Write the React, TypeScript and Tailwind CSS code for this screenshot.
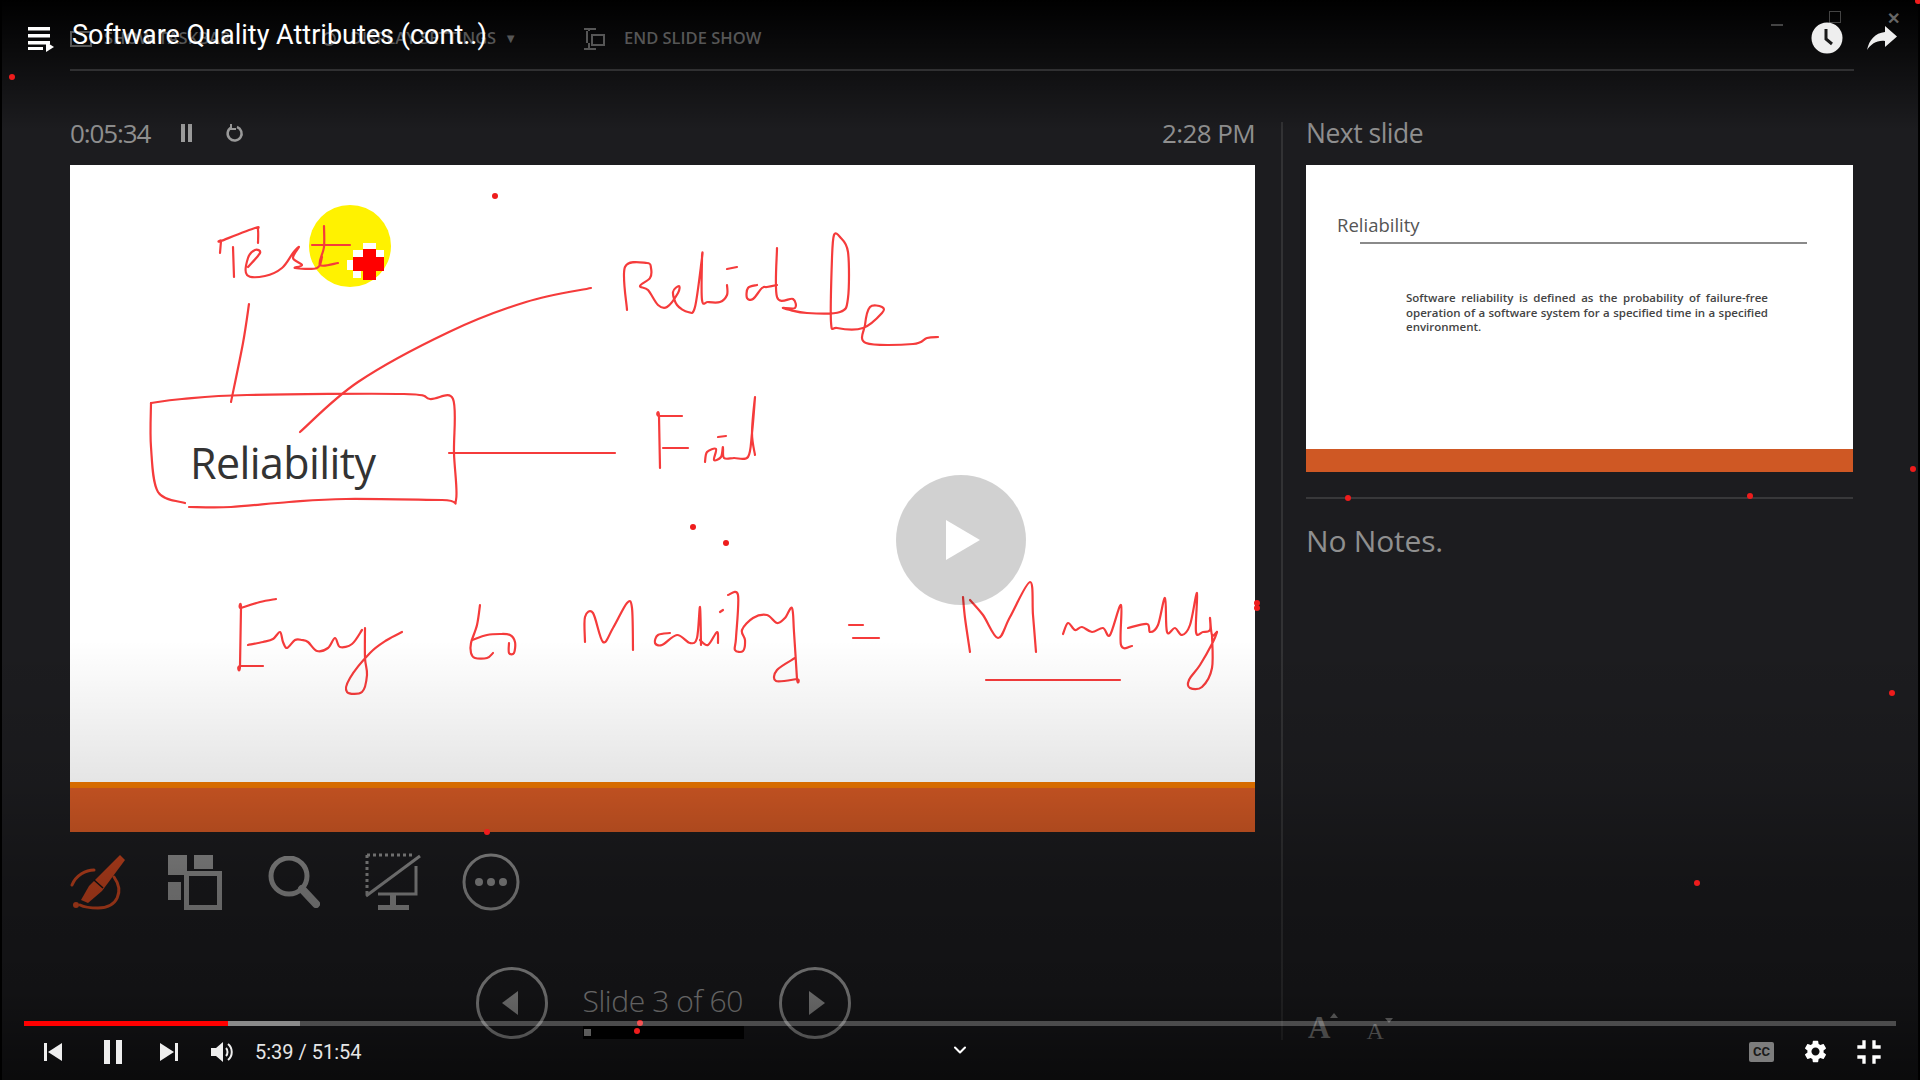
import React from "react";
import { ChevronDown } from "lucide-react";
import { MdSettings, MdFullscreenExit } from "react-icons/md";

// pen strokes as screen coordinates (the slide svg's viewBox is offset to match).
// a repeated point keeps a corner sharp
const inkStrokes = [
  // Test
  "220,253 221,241 221,241 255,228 258,230 258,243",
  "233,247 234,277",
  "248,267 260,253 255,250 248,258 247,275 265,276 282,268 293,253 299,247 293,258 302,265 295,268 317,268 322,257",
  "324,226 324,247 320,265 338,263",
  "312,245 350,245",
  // connectors and box
  "249,304 243,343 231,402",
  "591,288 526,302 449,332 358,382 300,432",
  "151,403 182,399 247,395 404,394 430,399 453,399 454,453 456,500 442,500 346,499 289,502 231,507 189,507",
  "151,403 151,447 158,492 185,503",
  "449,453 615,453",
  // Reliable
  "627,310 625,267 647,263 651,268 650,278 640,286 648,290 658,305 667,307 678,293 679,286 673,292 677,305 688,312 695,307 702,258 702,258 702,300 708,302 720,302 727,295 727,285",
  "727,269 737,267",
  "757,285 748,288 747,298 753,299 762,288 767,287 777,285",
  "777,248 777,297 793,299 795,308 783,308 807,313 840,312 848,298 848,252 840,237 834,235 832,258 831,322 837,328 863,328 882,313 882,307 870,307 865,325 866,343 913,344 927,338 938,337",
  // Fail
  "660,468 659,416 659,416 682,416",
  "663,448 688,448",
  "705,462 707,452 716,449 714,460 721,457 723,447 724,458 734,458 748,457 752,433 755,397 752,433 755,455",
  "718,437 726,436",
  // Easy
  "276,599 260,602 241,608 241,608 240,666 240,666 263,666",
  "248,645 263,642 273,639 280,632 283,642 287,648 295,640 302,640 308,642 317,651 328,648 335,638 340,647 352,644 362,630",
  "365,628 365,658 367,675 362,692 347,692 350,678 370,653 387,640 402,632",
  // to
  "480,605 477,625 471,643 471,653 475,658 487,658 493,653",
  "472,640 487,635 500,634 510,635 515,642 514,653 509,653 509,643",
  // Modify
  "585,642 585,617 593,613 603,642 613,628 627,603 632,608 633,650",
  "670,633 658,635 655,643 662,645 677,635 690,643 697,638 700,607 701,645",
  "700,640 708,645 717,632 718,643",
  "720,612 723,610",
  "728,595 738,595 736,638 735,650 743,651 745,640 742,630 753,618 767,615 777,623 785,618 792,608 794,632 797,679 797,679 776,681 777,670 795,658",
  // =
  "849,625 863,625",
  "853,638 879,638",
  // Maintainably
  "963,597 965,618 970,652",
  "970,600 983,615 998,638 1010,617 1030,582 1033,615 1036,652",
  "1063,634 1068,623 1075,630 1082,627 1092,632 1103,628 1110,635 1121,605 1121,645 1132,646",
  "1128,628 1147,624 1150,632 1158,625 1165,598 1167,632 1175,628 1182,635 1190,625 1197,593 1196,632 1203,632 1210,630 1210,618 1212,635 1217,632",
  "1217,632 1213,642 1200,665 1189,680 1190,688 1202,687 1212,668 1212,635",
  "986,680 1120,680",
];

// catmull-rom through the traced points, handwriting is not polygonal
const smoothPath = (stroke: string) => {
  const p = stroke.split(" ").map((s) => s.split(",").map(Number));
  let d = `M${p[0][0]} ${p[0][1]}`;
  for (let i = 0; i < p.length - 1; i++) {
    const a = p[i - 1] ?? p[i];
    const b = p[i];
    const c = p[i + 1];
    const e = p[i + 2] ?? c;
    d += ` C${b[0] + (c[0] - a[0]) / 6} ${b[1] + (c[1] - a[1]) / 6} ${c[0] - (e[0] - b[0]) / 6} ${c[1] - (e[1] - b[1]) / 6} ${c[0]} ${c[1]}`;
  }
  return d;
};

const laserDots = [
  [12, 77], [495, 196], [693, 527], [726, 543], [487, 832], [640, 1023], [637, 1031],
  [1257, 603], [1257, 608], [1348, 498], [1750, 496], [1913, 469], [1892, 693], [1697, 883], [1918, 1],
];

const PenIcon = () => (
  <svg viewBox="0 0 56 58" className="w-14 h-[58px] text-[#c8451f]" fill="none">
    <path d="M2 32 C6 22 16 17 24 17" stroke="currentColor" strokeWidth="3" strokeLinecap="round" />
    <path d="M44 24 C54 38 48 55 28 55 C20 55 14 54 10 52" stroke="currentColor" strokeWidth="3" strokeLinecap="round" />
    <path d="M50 2 L55 7 L32 38 L18 50 L11 47 L19 33 Z" fill="currentColor" />
    <path d="M24 27 L33 35" stroke="#141416" strokeWidth="1.5" />
    <circle cx="6" cy="52" r="3" fill="currentColor" />
  </svg>
);

const SlidesIcon = () => (
  <svg viewBox="0 0 54 55" className="w-[54px] h-[55px] text-[#909090]" fill="none">
    <rect x="0" y="0" width="19" height="20" fill="currentColor" />
    <rect x="26" y="0" width="19" height="14" fill="currentColor" />
    <rect x="0" y="27" width="13" height="18" fill="currentColor" />
    <rect x="18.5" y="18.5" width="33" height="34" stroke="currentColor" strokeWidth="5" />
  </svg>
);

const SearchIcon = () => (
  <svg viewBox="0 0 52 52" className="w-[52px] h-[52px] text-[#909090]" fill="none">
    <circle cx="21" cy="20" r="18" stroke="currentColor" strokeWidth="5" />
    <path d="M34 33 L48 48" stroke="currentColor" strokeWidth="8" strokeLinecap="round" />
  </svg>
);

const BlackScreenIcon = () => (
  <svg viewBox="0 0 56 58" className="w-14 h-[58px] text-[#909090]" fill="none">
    <path d="M2 2 H50 M2 2 V42" stroke="currentColor" strokeWidth="3" strokeDasharray="3 3" />
    <path d="M1 43 L55 3" stroke="currentColor" strokeWidth="3" />
    <path d="M51 13 V41 H13" stroke="currentColor" strokeWidth="3" />
    <rect x="25" y="41" width="6" height="12" fill="currentColor" />
    <rect x="13" y="52" width="31" height="5" fill="currentColor" />
  </svg>
);

const MoreIcon = () => (
  <svg viewBox="0 0 58 58" className="w-[58px] h-[58px] text-[#909090]" fill="none">
    <circle cx="29" cy="29" r="27" stroke="currentColor" strokeWidth="3" />
    <circle cx="17" cy="29" r="4" fill="currentColor" />
    <circle cx="29" cy="29" r="4" fill="currentColor" />
    <circle cx="41" cy="29" r="4" fill="currentColor" />
  </svg>
);

const NavButton = ({ dir }: { dir: "prev" | "next" }) => (
  <svg viewBox="0 0 72 72" className="w-[72px] h-[72px] text-[#a0a0a0]" fill="none">
    <circle cx="36" cy="36" r="34.5" stroke="currentColor" strokeWidth="3" />
    {dir === "prev" ? <path d="M42 24 V48 L26 36 Z" fill="currentColor" /> : <path d="M30 24 V48 L46 36 Z" fill="currentColor" />}
  </svg>
);

const Slide = () => (
  <div className="relative w-[1185px] h-[667px] bg-white flex flex-col overflow-hidden">
    <div className="flex-1 pt-[268px] pl-[120px]">
      <p className="font-['Open_Sans'] text-[43px] leading-[60px] text-[#333] tracking-[-0.6px]">Reliability</p>
    </div>
    <div className="h-[6px] bg-[#f07800]" />
    <div className="h-[44px] bg-[#d65a25]" />
    {/* pen ink and the cursor */}
    <svg viewBox="70 165 1185 667" className="absolute inset-0 w-full h-full" fill="none">
      <circle cx="350" cy="246" r="41" fill="#fff200" />
      <rect x="347" y="260" width="6" height="10" fill="#fff" />
      <rect x="363" y="243" width="13" height="6" fill="#fff" />
      <rect x="353" y="250" width="10" height="7" fill="#fff" />
      <rect x="376" y="250" width="8" height="7" fill="#fff" />
      <rect x="353" y="271" width="8" height="7" fill="#fff" />
      <rect x="353" y="257" width="31" height="14" fill="#f00" />
      <rect x="363" y="249" width="13" height="31" fill="#f00" />
      {inkStrokes.map((s) => (
        <path key={s} d={smoothPath(s)} stroke="#f53b3b" strokeWidth="2.2" strokeLinejoin="round" strokeLinecap="round" />
      ))}
    </svg>
  </div>
);

const NextThumb = () => (
  <div className="w-[547px] h-[307px] bg-white flex flex-col">
    <div className="flex-1 pt-[46px]">
      <p className="pl-[31px] font-['Open_Sans'] text-[18.5px] leading-[28px] text-[#555]">Reliability</p>
      <div className="ml-[54px] w-[447px] h-[2px] mt-[3px] bg-[#8a8a8a]" />
      <p className="ml-[100px] w-[362px] mt-[47px] font-['Open_Sans'] font-semibold text-[11.5px] leading-[14.5px] text-[#444] text-justify">
        Software reliability is defined as the probability of failure-free operation of a software system for a specified time in a specified environment.
      </p>
    </div>
    <div className="h-[23px] bg-[#cf5824]" />
  </div>
);

export default function App() {
  return (
    <div className="relative w-[1920px] h-[1080px] overflow-hidden bg-[#1c1c1f] flex flex-col font-['Open_Sans'] shadow-[inset_2px_0_0_#000,inset_-2px_0_0_#000]">
      {/* faded presenter toolbar */}
      <div className="relative z-10 ml-[70px] w-[1784px] h-[71px] shrink-0 border-b-2 border-[#303032] flex items-center gap-[20px] pt-[8px] text-[#565656] font-semibold text-[16.5px]">
        <div className="flex items-center gap-[12px] w-[232px]">
          <span className="w-[22px] h-[16px] border-2 border-[#565656]" />
          <span>SHOW TASKBAR</span>
        </div>
        <div className="flex items-center gap-[14px] w-[240px]">
          <span className="w-[14px] h-[14px] rounded-full border-2 border-[#565656]" />
          <span className="whitespace-nowrap">DISPLAY SETTINGS</span>
          <span className="-ml-[6px] text-[13px]">▼</span>
        </div>
        <div className="flex items-center gap-[18px]">
          <svg viewBox="0 0 24 24" className="w-6 h-6" fill="none" stroke="#565656" strokeWidth="2">
            <path d="M2 2 H14 M7 2 V4 M5 4 V16 M7 16 V21 M2 22 H14" />
            <rect x="10" y="8" width="12" height="10" />
          </svg>
          <span>END SLIDE SHOW</span>
        </div>
      </div>

      <div className="flex pl-[70px] pt-[51px]">
        {/* current slide column */}
        <div className="w-[1185px] flex flex-col">
          <div className="h-[43px] flex items-start justify-between text-[#8f8f8f] text-[26px] leading-[22px]">
            <div className="flex items-center">
              <span className="tracking-[-1.1px]">0:05:34</span>
              <span className="ml-[31px] flex gap-[3px]">
                <span className="w-[4px] h-[18px] bg-[#9a9a9a]" />
                <span className="w-[4px] h-[18px] bg-[#9a9a9a]" />
              </span>
              <svg viewBox="0 0 20 20" className="ml-[33px] w-[20px] h-[20px]" fill="none" stroke="#9a9a9a" strokeWidth="2.5">
                <path d="M12 4 A7 7 0 1 1 6 4.6" />
                <path d="M6 1 V6 H11" strokeWidth="2" />
              </svg>
            </div>
            <span className="tracking-[-0.6px]">2:28 PM</span>
          </div>
          <Slide />
          <div className="mt-[21px] h-[58px] flex items-center">
            <PenIcon />
            <div className="ml-[42px]"><SlidesIcon /></div>
            <div className="ml-[46px]"><SearchIcon /></div>
            <div className="ml-[45px]"><BlackScreenIcon /></div>
            <div className="ml-[41px]"><MoreIcon /></div>
          </div>
          <div className="mt-[56px] flex items-center justify-center gap-[35px] pl-[1px] text-[#a0a0a0]">
            <NavButton dir="prev" />
            <div className="w-[161px] h-[72px] flex flex-col">
              <span className="h-[59px] pt-[15px] text-[30px] leading-[38px] font-light whitespace-nowrap tracking-[-0.4px]">Slide 3 of 60</span>
              <div className="h-[13px] bg-black flex items-center pl-[1px]">
                <span className="w-[7px] h-[7px] bg-[#b0b0b0]" />
              </div>
            </div>
            <NavButton dir="next" />
          </div>
        </div>

        <div className="ml-[26px] w-[2px] h-[918px] bg-[#323234]" />

        {/* next slide and notes column */}
        <div className="ml-[23px] w-[547px] h-[918px] flex flex-col text-[#8f8f8f]">
          <div className="h-[43px] text-[26.5px] leading-[22px] tracking-[-0.5px]">Next slide</div>
          <NextThumb />
          <div className="mt-[25px] h-[2px] bg-[#38383a]" />
          <p className="mt-[22px] text-[30px] leading-[40px] tracking-[-0.2px]">No Notes.</p>
          <div className="mt-auto -mb-[3px] flex items-end gap-[36px] font-['Liberation_Serif'] font-bold text-[#8c8c8c] leading-none">
            <span className="relative ml-[2px] text-[31px]">
              A
              <span className="absolute -right-[8px] top-[1px] w-0 h-0 border-x-[4px] border-x-transparent border-b-[5px] border-b-[#8c8c8c]" />
            </span>
            <span className="relative text-[24px] font-normal">
              A
              <span className="absolute -right-[9px] top-[-1px] w-0 h-0 border-x-[4px] border-x-transparent border-t-[5px] border-t-[#8c8c8c]" />
            </span>
          </div>
        </div>
      </div>

      {/* player gradients */}
      <div className="absolute top-0 inset-x-0 h-[130px] bg-gradient-to-b from-black to-transparent" />
      <div className="absolute bottom-0 inset-x-0 h-[440px] bg-[linear-gradient(to_bottom,rgba(0,0,0,0)_0%,rgba(0,0,0,0.1)_32%,rgba(0,0,0,0.28)_55%,rgba(0,0,0,0.36)_80%,rgba(0,0,0,0.62)_100%)]" />

      {/* laser pointer trail */}
      <svg viewBox="0 0 1920 1080" className="absolute inset-0 w-full h-full">
        {laserDots.map(([x, y]) => (
          <circle key={`${x}-${y}`} cx={x} cy={y} r="3" fill="#ee1c1c" />
        ))}
      </svg>

      {/* player title bar */}
      <div className="absolute z-20 top-0 inset-x-0 h-[60px] pl-[28px] pr-[23px] flex items-center justify-between pt-[18px]">
        <div className="flex items-center gap-[18px]">
          <svg viewBox="0 0 26 25" className="w-[26px] h-[25px]" fill="#fff">
            <rect x="0" y="0" width="22" height="3.5" />
            <rect x="0" y="7" width="22" height="3.5" />
            <rect x="0" y="14" width="22" height="3.5" />
            <rect x="0" y="20" width="15" height="3" />
            <path d="M18 15 L26 20 L18 25 Z" />
          </svg>
          <span className="font-['Roboto'] text-[27px] leading-[36px] text-white -mt-[9px]">Software Quality Attributes (cont..)</span>
        </div>
        <div className="flex items-center gap-[24px] -mt-[3px]">
          <svg viewBox="0 0 32 32" className="w-[32px] h-[32px]">
            <circle cx="16" cy="16" r="15.5" fill="#eee" />
            <path d="M15 7 V17 L21 22" fill="none" stroke="#1a1a1a" strokeWidth="3" />
          </svg>
          <svg viewBox="0 0 30 24" className="w-[30px] h-[24px]" fill="#eee">
            <path d="M18 0 L30 10.5 L18 21 V15 C10 14 4 18 0 24 C2 14 8 7 18 6 Z" />
          </svg>
        </div>
      </div>
      {/* faded window buttons behind the player's */}
      <div className="absolute top-[10px] right-[20px] flex items-center gap-[46px] text-[#555]">
        <span className="w-[12px] h-[2px] bg-[#444] mt-[14px]" />
        <span className="w-[12px] h-[12px] border border-[#444] -mt-[2px]" />
        <span className="text-[16px] leading-[16px] font-bold text-[#666]">✕</span>
      </div>

      {/* play overlay */}
      <div className="absolute left-[896px] top-[475px] w-[130px] h-[130px] rounded-full bg-black/[0.18] flex items-center justify-center pl-[3px]">
        <svg viewBox="0 0 34 40" className="w-[34px] h-[40px]" fill="#fff">
          <path d="M0 0 L34 20 L0 40 Z" />
        </svg>
      </div>

      {/* player controls */}
      <div className="absolute bottom-0 left-[24px] right-[24px] h-[59px] flex flex-col">
        <div className="h-[5px] bg-white/25 flex">
          <div className="w-[204px] bg-[#f00]" />
          <div className="w-[72px] bg-[#8a8a8a]" />
        </div>
        <div className="flex-1 flex items-center justify-between -mt-[3px]">
          <div className="flex items-center text-white">
            <svg viewBox="0 0 18 18" className="ml-[20px] w-[18px] h-[18px]" fill="#eee">
              <rect x="0" y="0" width="3" height="18" />
              <path d="M18 0 V18 L4 9 Z" />
            </svg>
            <span className="ml-[42px] flex gap-[6px]">
              <span className="w-[6px] h-[24px] bg-[#eee]" />
              <span className="w-[6px] h-[24px] bg-[#eee]" />
            </span>
            <svg viewBox="0 0 18 18" className="ml-[38px] w-[18px] h-[18px]" fill="#eee">
              <path d="M0 0 V18 L14 9 Z" />
              <rect x="15" y="0" width="3" height="18" />
            </svg>
            <svg viewBox="0 0 22 20" className="ml-[33px] w-[22px] h-[20px]" fill="none">
              <path d="M0 6 H5 L12 0 V20 L5 14 H0 Z" fill="#eee" />
              <path d="M15 6 C17 8 17 12 15 14" stroke="#eee" strokeWidth="2" />
              <path d="M17 2 C22 6 22 14 17 18" stroke="#eee" strokeWidth="2" />
            </svg>
            <span className="ml-[22px] font-['Roboto'] text-[20px] leading-[24px] text-[#e6e6e6]">5:39 / 51:54</span>
          </div>
          <ChevronDown className="absolute left-[926px] top-[19px] w-[20px] h-[20px] text-white" strokeWidth={2.5} />
          <div className="flex items-center pr-[7px]">
            <span className="w-[25px] h-[20px] rounded-[2px] bg-[#7d7d7d] flex items-center justify-center font-['Roboto'] font-bold text-[13px] leading-none text-[#1a1a1a]">CC</span>
            <MdSettings className="ml-[28px] w-[27px] h-[27px] text-white" />
            <MdFullscreenExit className="ml-[20px] w-[40px] h-[40px] text-white" />
          </div>
        </div>
      </div>
    </div>
  );
}
